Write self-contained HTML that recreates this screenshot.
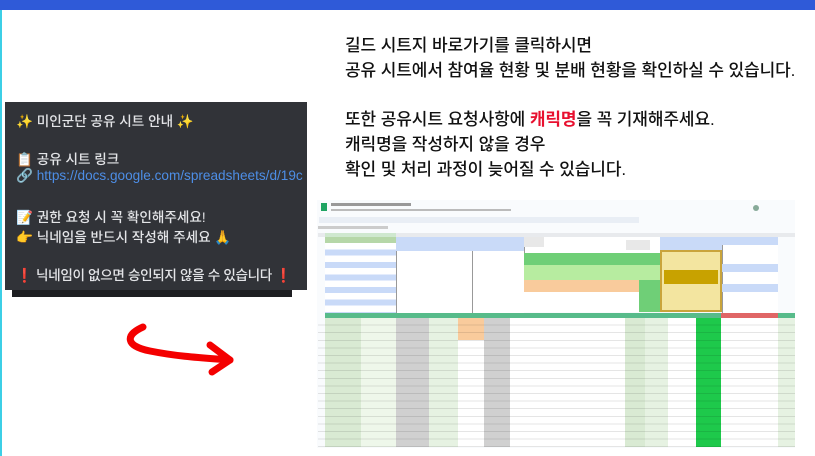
<!DOCTYPE html>
<html><head><meta charset="utf-8"><style>
*{margin:0;padding:0;box-sizing:border-box}
body{width:815px;height:456px;background:#fff;position:relative;overflow:hidden;font-family:"Liberation Sans","Noto Sans CJK KR",sans-serif}
.a{position:absolute}
.r{font-size:17px;color:#111;left:345px;white-space:nowrap;letter-spacing:-0.1px;font-weight:500}
.d{font-size:13.6px;color:#e3e4e7;left:16px;white-space:nowrap;font-weight:500}
</style></head><body>
<div class="a" style="left:0;top:0;width:815px;height:10px;background:#2f5ad8"></div>
<div class="a" style="left:0;top:10px;width:2px;height:446px;background:#3ccfe6"></div>

<div class="a r" style="top:31px">길드 시트지 바로가기를 클릭하시면</div>
<div class="a r" style="top:56px">공유 시트에서 참여율 현황 및 분배 현황을 확인하실 수 있습니다.</div>
<div class="a r" style="top:105px">또한 공유시트 요청사항에 <b style="color:#e8102f">캐릭명</b>을 꼭 기재해주세요.</div>
<div class="a r" style="top:130px">캐릭명을 작성하지 않을 경우</div>
<div class="a r" style="top:155px">확인 및 처리 과정이 늦어질 수 있습니다.</div>

<div class="a" style="left:5px;top:102px;width:302px;height:188px;background:#313338;overflow:hidden">
<div class="a d" style="left:11px;top:8px">✨ 미인군단 공유 시트 안내 ✨</div>
<div class="a d" style="left:11px;top:46px">📋 공유 시트 링크</div>
<div class="a d" style="left:11px;top:66px">🔗 <span style="color:#4d8ee6">https://docs.google.com/spreadsheets/d/19c</span></div>
<div class="a d" style="left:11px;top:104px">📝 권한 요청 시 꼭 확인해주세요!</div>
<div class="a d" style="left:11px;top:124px">👉 닉네임을 반드시 작성해 주세요 🙏</div>
<div class="a d" style="left:11px;top:162px;letter-spacing:-0.35px"><span style="color:#d8202a">❗</span> 닉네임이 없으면 승인되지 않을 수 있습니다 <span style="color:#d8202a">❗</span></div>
</div>
<div class="a" style="left:12px;top:290px;width:280px;height:7px;background:#1e1f22"></div>

<svg class="a" style="left:0;top:0" width="815" height="456">
<path d="M143 327 C125 335 125 346 150 351 C180 357 205 358 230 360" fill="none" stroke="#f40000" stroke-width="7" stroke-linecap="round"/>
<path d="M210 345 L230 360 L212 372" fill="none" stroke="#f40000" stroke-width="7" stroke-linecap="round" stroke-linejoin="round"/>
</svg>

<div class="a" style="left:317px;top:200px;width:478px;height:248px;background:#f9fbfd"></div>
<div class="a" style="left:321px;top:203px;width:6px;height:8px;background:#1fa463"></div>
<div class="a" style="left:331px;top:203px;width:80px;height:3px;background:#999"></div>
<div class="a" style="left:331px;top:209px;width:180px;height:2px;background:#bbb"></div>
<div class="a" style="left:319px;top:217px;width:320px;height:6px;background:#e9eef5"></div>
<div class="a" style="left:753px;top:205px;width:6px;height:6px;border-radius:50%;background:#8a9"></div>
<div class="a" style="left:318px;top:226px;width:70px;height:3px;background:#ccc"></div>
<div class="a" style="left:318px;top:233px;width:477px;height:4px;background:#e8eaed"></div>
<div class="a" style="left:325px;top:233px;width:71px;height:4px;background:#cfe8cf"></div>

<div class="a" style="left:325px;top:237px;width:71px;height:76px;background:repeating-linear-gradient(#c9daf8 0 6px,#fff 6px 12.5px)"></div>
<div class="a" style="left:325px;top:237px;width:71px;height:6px;background:#b6d7a8"></div>
<div class="a" style="left:396px;top:237px;width:76px;height:76px;background:#fff;border-left:1px solid #999"></div>
<div class="a" style="left:396px;top:237px;width:76px;height:14px;background:#c9daf8"></div>
<div class="a" style="left:472px;top:237px;width:52px;height:76px;background:#fff;border-left:1px solid #999"></div>
<div class="a" style="left:472px;top:237px;width:52px;height:14px;background:#c9daf8"></div>
<div class="a" style="left:524px;top:237px;width:198px;height:16px;background:#fff;border-left:1px solid #999"></div>
<div class="a" style="left:524px;top:237px;width:20px;height:10px;background:#e8e8e8"></div>
<div class="a" style="left:534px;top:253px;width:14px;height:16px;border-radius:50%;background:#c94a4a"></div>
<div class="a" style="left:626px;top:240px;width:24px;height:10px;background:#e8e8e8"></div>
<div class="a" style="left:628px;top:253px;width:14px;height:16px;border-radius:50%;background:#3a4560"></div>
<div class="a" style="left:524px;top:253px;width:136px;height:12px;background:#6fcf77"></div>
<div class="a" style="left:524px;top:265px;width:136px;height:15px;background:#b7eca0"></div>
<div class="a" style="left:524px;top:280px;width:115px;height:12px;background:#f9cb9c"></div>
<div class="a" style="left:524px;top:292px;width:115px;height:20px;background:#fff"></div>
<div class="a" style="left:639px;top:280px;width:21px;height:32px;background:#6fcf77"></div>
<div class="a" style="left:660px;top:250px;width:62px;height:62px;background:#f3e5a0;border:2px solid #c9a43b"></div>
<div class="a" style="left:664px;top:270px;width:54px;height:14px;background:#c8a200"></div>
<div class="a" style="left:660px;top:237px;width:66px;height:13px;background:#c9daf8"></div>
<div class="a" style="left:722px;top:237px;width:56px;height:76px;background:#fff;border-left:1px solid #999"></div>
<div class="a" style="left:722px;top:237px;width:56px;height:8px;background:#c9daf8"></div>
<div class="a" style="left:722px;top:264px;width:56px;height:8px;background:#c9daf8"></div>
<div class="a" style="left:722px;top:284px;width:56px;height:8px;background:#c9daf8"></div>

<div class="a" style="left:325px;top:313px;width:470px;height:5px;background:#57bb8a"></div>
<div class="a" style="left:721px;top:313px;width:57px;height:5px;background:#e06666"></div>

<div class="a" style="left:325px;top:318px;width:36px;height:129px;background:#d9ead3"></div>
<div class="a" style="left:361px;top:318px;width:35px;height:129px;background:#eef7ea"></div>
<div class="a" style="left:396px;top:318px;width:33px;height:129px;background:#d0d0d0"></div>
<div class="a" style="left:429px;top:318px;width:29px;height:129px;background:#e6f2e2"></div>
<div class="a" style="left:458px;top:318px;width:26px;height:129px;background:#fff"></div>
<div class="a" style="left:458px;top:318px;width:26px;height:22px;background:#f9cb9c"></div>
<div class="a" style="left:484px;top:318px;width:26px;height:129px;background:#d0d0d0"></div>
<div class="a" style="left:510px;top:318px;width:115px;height:129px;background:#fff"></div>
<div class="a" style="left:625px;top:318px;width:20px;height:129px;background:#d9ead3"></div>
<div class="a" style="left:645px;top:318px;width:23px;height:129px;background:#e6f2e2"></div>
<div class="a" style="left:668px;top:318px;width:28px;height:129px;background:#fff"></div>
<div class="a" style="left:696px;top:318px;width:25px;height:129px;background:#1ec94b"></div>
<div class="a" style="left:721px;top:318px;width:57px;height:129px;background:#fff"></div>
<div class="a" style="left:778px;top:318px;width:17px;height:129px;background:#e6f2e2"></div>
<div class="a" style="left:318px;top:318px;width:477px;height:129px;background:repeating-linear-gradient(transparent 0 6.6px,rgba(0,0,0,.1) 6.6px 7.6px)"></div>
</body></html>
